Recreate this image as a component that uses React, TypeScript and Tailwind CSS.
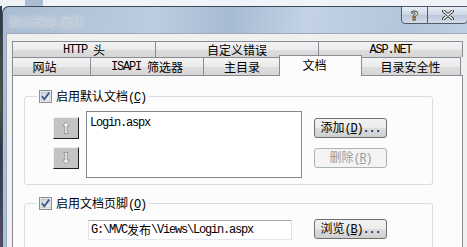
import React from 'react';

// Latin runs in a Courier-like face squeezed to SimSun's half-width, CJK runs in Noto Sans CJK
function Mixed({ text }: { text: string }) {
    const parts = text.match(/[\x00-\x7f]+|[^\x00-\x7f]+/g) ?? [];
    return (
        <>
            {parts.map((p, i) =>
                /^[\x00-\x7f]/.test(p) ? (
                    <span key={i} className="font-['Liberation_Mono',monospace] tracking-[-1.2px] whitespace-pre">
                        {p}
                    </span>
                ) : (
                    <span key={i} className="font-['Noto_Sans_CJK_SC',sans-serif]">
                        {p}
                    </span>
                )
            )}
        </>
    );
}

function Hotkey({ label, k, tail = '' }: { label: string; k: string; tail?: string }) {
    return (
        <span className="whitespace-pre">
            <Mixed text={label + '('} />
            <span className="underline underline-offset-[1px]">
                <Mixed text={k} />
            </span>
            <Mixed text={')' + tail} />
        </span>
    );
}

function CheckBox() {
    return (
        <svg width="13" height="13" viewBox="0 0 13 13" className="shrink-0">
            <defs>
                <linearGradient id="cbg" x1="0" y1="0" x2="1" y2="1">
                    <stop offset="0" stopColor="#cbd1d8" />
                    <stop offset="1" stopColor="#f4f6f8" />
                </linearGradient>
            </defs>
            <rect x="0.5" y="0.5" width="12" height="12" fill="#fff" stroke="#8e8f8f" />
            <rect x="2" y="2" width="9" height="9" fill="url(#cbg)" stroke="#a4acb6" strokeWidth="0.6" />
            <path d="M3 6.2 L5.3 9.2 L10.2 2.6" fill="none" stroke="#3d5588" strokeWidth="1.8" />
        </svg>
    );
}

function WinButton({ children, disabled }: { children: React.ReactNode; disabled?: boolean }) {
    return (
        <div
            className={
                disabled
                    ? 'w-[73px] h-[20px] rounded-[3px] border border-[#adb2b5] bg-[#f4f4f4] text-[#9a9a9a] flex items-center justify-center text-[12px] leading-[12px]'
                    : 'w-[73px] h-[20px] rounded-[3px] border border-[#707070] bg-[linear-gradient(#f2f2f2_0%,#ebebeb_50%,#dddddd_51%,#cfcfcf_100%)] text-black flex items-center justify-center text-[12px] leading-[12px]'
            }
        >
            {children}
        </div>
    );
}

function ArrowButton({ down }: { down?: boolean }) {
    return (
        <div className="w-[26px] h-[22px] bg-[#c4c4c4] border border-t-[#f0f0f0] border-l-[#f0f0f0] border-r-[#1e1e1e] border-b-[#1e1e1e] flex items-center justify-center">
            <svg width="10" height="14" viewBox="0 0 10 14" className={down ? 'rotate-180' : ''}>
                <path d="M5 1 L8.5 5 L6.2 5 L6.2 11 L7.5 12.5 L3 12.5 L3.8 11 L3.8 5 L1.5 5 Z" fill="#f4f4f4" stroke="#8a8a8a" strokeWidth="0.8" />
            </svg>
        </div>
    );
}

const tabBase =
    'h-full border-t border-l border-r border-[#898c95] bg-[linear-gradient(#f3f3f3_0%,#ebebeb_50%,#dedede_51%,#d6d6d6_100%)] flex items-center justify-center text-[12px] leading-[12px] text-black';

export default function App() {
    return (
        <div className="w-[467px] h-[247px] overflow-hidden bg-[#e9eff5] flex flex-col">
            {/* desktop behind the dialog */}
            <div className="h-[6px] flex shrink-0">
                <div className="w-[25px] bg-[#eef2f6]" />
                <div className="w-[18px] bg-[#a9bdd3]" />
                <div className="flex-1 bg-[#f0f4f8]" />
            </div>

            <div className="flex-1 flex min-h-0">
                <div className="w-[2px] shrink-0 bg-[linear-gradient(#2c3645,#4a5a3a_40%,#2c3645_60%,#5a4a6a)]" />

                {/* window */}
                <div className="w-[470px] shrink-0 flex flex-col rounded-tl-[7px] border-l border-t border-[#3c4a5c] bg-[linear-gradient(100deg,#a9bcd1_0%,#bccde0_30%,#a7bbd2_45%,#c3d3e5_60%,#b2c5da_80%,#c8d7e8_100%)]">
                    {/* title bar */}
                    <div className="h-[26px] flex shrink-0">
                        <div className="pl-[6px] pt-[8px] text-[12px] leading-[14px] font-bold text-[#b9c6d4] [text-shadow:0_0_3px_#dfe8f1] font-['Noto_Sans_CJK_SC',sans-serif]">
                            默认网站 属性
                        </div>
                        <div className="ml-auto mr-[4px] flex h-[18px] -mt-px">
                            <div className="w-[27px] h-full rounded-bl-[4px] border border-[#4e5b6b] bg-[linear-gradient(#e9eef4,#cdd7e3_50%,#bac7d6_51%,#d3dde8)] flex items-center justify-center text-[13px] leading-[13px] font-bold text-white [-webkit-text-stroke:0.8px_#3a3a3a] font-['DejaVu_Sans',sans-serif]">
                                ?
                            </div>
                            <div className="w-[41px] h-full -ml-px rounded-br-[4px] border border-[#4e5b6b] bg-[linear-gradient(#e9eef4,#cdd7e3_50%,#bac7d6_51%,#d3dde8)] flex items-center justify-center">
                                <svg width="12" height="10" viewBox="0 0 12 10">
                                    <path d="M1.5 1 L10.5 9 M10.5 1 L1.5 9" stroke="#3a3a3a" strokeWidth="3.2" strokeLinecap="round" />
                                    <path d="M1.5 1 L10.5 9 M10.5 1 L1.5 9" stroke="#ffffff" strokeWidth="1.4" strokeLinecap="round" />
                                </svg>
                            </div>
                        </div>
                    </div>

                    {/* client area */}
                    <div className="flex-1 ml-[3px] border-l border-t border-[#9fabb9] bg-[#f0f0f0] pl-[5px] pt-[7px]">
                        <div className="w-[451px]">
                            {/* back row of tabs */}
                            <div className="flex h-[16px]">
                                <div className={tabBase + ' w-[144px]'}>
                                    <Mixed text="HTTP 头" />
                                </div>
                                <div className={tabBase + ' w-[164px] -ml-px'}>
                                    <Mixed text="自定义错误" />
                                </div>
                                <div className={tabBase + ' w-[145px] -ml-px'}>
                                    <Mixed text="ASP.NET" />
                                </div>
                            </div>
                            {/* front row of tabs */}
                            <div className="flex h-[18px] items-end">
                                <div className={tabBase + ' w-[79px] pr-[14px]'}>
                                    <Mixed text="网站" />
                                </div>
                                <div className={tabBase + ' w-[114px] -ml-px'}>
                                    <Mixed text="ISAPI 筛选器" />
                                </div>
                                <div className={tabBase + ' w-[78px] -ml-px'}>
                                    <Mixed text="主目录" />
                                </div>
                                <div className="relative z-10 -ml-[2px] -mr-[1px] mb-[-1px] w-[83px] h-[21px] border-t border-l border-r border-[#898c95] bg-[#fcfcfc] flex justify-center pt-[3px] pr-[12px] text-[12px] leading-[12px]">
                                    <Mixed text="文档" />
                                </div>
                                <div className={tabBase + ' w-[101px] -ml-px'}>
                                    <Mixed text="目录安全性" />
                                </div>
                            </div>

                            {/* tab page */}
                            <div className="h-[200px] border border-[#898c95] bg-[#fcfcfc] pt-[14px] pl-[11px] text-[12px] text-black">
                                <fieldset className="w-[409px] border border-[#d5dfe5] rounded-[3px]">
                                    <legend className="ml-[12px] px-[2px] h-[13px]">
                                        <span className="flex items-center gap-[4px] h-[13px] leading-[13px]">
                                            <CheckBox />
                                            <Hotkey label="启用默认文档" k="C" />
                                        </span>
                                    </legend>
                                    <div className="flex items-start pl-[28px] pt-[8px] pb-[6px]">
                                        <div className="flex flex-col gap-[8px] mt-[6px]">
                                            <ArrowButton />
                                            <ArrowButton down />
                                        </div>
                                        <div className="ml-[7px] w-[216px] h-[67px] border border-[#828790] bg-white pl-[3px] pt-[3px] leading-[14px]">
                                            <Mixed text="Login.aspx" />
                                        </div>
                                        <div className="ml-[12px] mt-[7px] flex flex-col gap-[10px]">
                                            <WinButton>
                                                <Hotkey label="添加" k="D" tail="..." />
                                            </WinButton>
                                            <WinButton disabled>
                                                <Hotkey label="删除" k="R" />
                                            </WinButton>
                                        </div>
                                    </div>
                                </fieldset>

                                <fieldset className="mt-[12px] w-[409px] h-[80px] border border-[#d5dfe5] rounded-[3px]">
                                    <legend className="ml-[12px] px-[2px] h-[13px]">
                                        <span className="flex items-center gap-[4px] h-[13px] leading-[13px]">
                                            <CheckBox />
                                            <Hotkey label="启用文档页脚" k="O" />
                                        </span>
                                    </legend>
                                    <div className="flex items-start pl-[63px] pt-[10px]">
                                        <div className="w-[204px] h-[20px] border border-[#abadb3] border-r-[#dbdfe6] border-b-[#e3e9ef] border-l-[#e2e3ea] bg-white pl-[2px] flex items-center leading-[14px]">
                                            <Mixed text="G:\MVC发布\Views\Login.aspx" />
                                        </div>
                                        <div className="ml-[22px] -mt-px">
                                            <WinButton>
                                                <Hotkey label="浏览" k="B" tail="..." />
                                            </WinButton>
                                        </div>
                                    </div>
                                </fieldset>
                            </div>
                        </div>
                    </div>
                </div>
            </div>
        </div>
    );
}
